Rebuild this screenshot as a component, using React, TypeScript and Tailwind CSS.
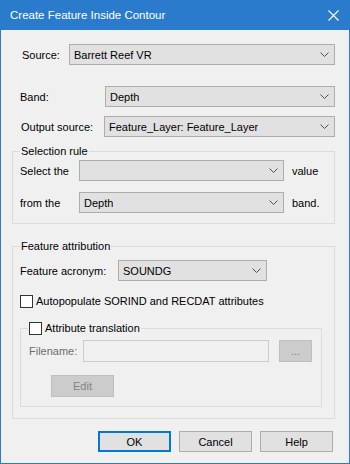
import React from "react";

const FONT = "font-['Liberation_Sans',Arial,sans-serif] text-[11px] leading-4 text-black";

function Chevron() {
  return (
    <svg width="9" height="5" viewBox="0 0 9 5" className="shrink-0">
      <path d="M0.5 0.5 L4.5 4.5 L8.5 0.5" fill="none" stroke="#505050" strokeWidth="1" />
    </svg>
  );
}

function Combo({ value, className }: { value?: string; className: string }) {
  return (
    <div
      className={`h-[21px] shrink-0 flex items-center justify-between pl-[4px] pr-[5px] bg-[#e1e1e1] border border-[#adadad] ${className}`}
    >
      <span className="truncate">{value}</span>
      <Chevron />
    </div>
  );
}

function Label({ text, className }: { text: string; className: string }) {
  return <span className={`shrink-0 whitespace-nowrap ${className}`}>{text}</span>;
}

function CheckBox() {
  return <div className="w-[13px] h-[13px] shrink-0 bg-white border border-[#333333]" />;
}

function Button({ label, primary }: { label: string; primary?: boolean }) {
  return (
    <button
      className={`w-[73px] h-[21px] shrink-0 flex items-center justify-center bg-[#e1e1e1] ${
        primary ? "border-2 border-[#0078d7]" : "border border-[#adadad]"
      }`}
    >
      {label}
    </button>
  );
}

export default function App() {
  return (
    <div className={`w-[350px] h-[464px] flex flex-col bg-[#f0f0f0] border-x border-b border-[#2b7bcc] ${FONT}`}>
      {/* Title bar */}
      <div className="h-[30px] shrink-0 -mx-px flex items-center justify-between bg-[#2b7bcc] pl-[10px] pr-[11px] text-white text-[11.5px]">
        <span>Create Feature Inside Contour</span>
        <svg width="11" height="11" viewBox="0 0 11 11">
          <path d="M0.5 0.5 L10.5 10.5 M10.5 0.5 L0.5 10.5" stroke="white" strokeWidth="1.1" />
        </svg>
      </div>

      {/* Source */}
      <div className="mt-[14px] flex items-center pl-[21px]">
        <Label text="Source:" className="w-[47px]" />
        <Combo value="Barrett Reef VR" className="w-[266px]" />
      </div>

      {/* Band */}
      <div className="mt-[21px] flex items-center pl-[19px]">
        <Label text="Band:" className="w-[85px]" />
        <Combo value="Depth" className="w-[230px]" />
      </div>

      {/* Output source */}
      <div className="mt-[9px] flex items-center pl-[20px]">
        <Label text="Output source:" className="w-[83px]" />
        <Combo value="Feature_Layer: Feature_Layer" className="w-[231px]" />
      </div>

      {/* Selection rule */}
      <fieldset className="mt-[6px] ml-[11px] w-[323px] shrink-0 border border-[#dcdcdc] pb-[10px]">
        <legend className="ml-[7px] px-[1px]">Selection rule</legend>
        <div className="mt-px flex items-center pl-[7px]">
          <Label text="Select the" className="w-[59px]" />
          <Combo className="w-[205px]" />
          <Label text="value" className="ml-[8px]" />
        </div>
        <div className="mt-[11px] flex items-center pl-[7px]">
          <Label text="from the" className="w-[59px]" />
          <Combo value="Depth" className="w-[205px]" />
          <Label text="band." className="ml-[8px]" />
        </div>
      </fieldset>

      {/* Feature attribution */}
      <fieldset className="mt-[14px] ml-[11px] w-[323px] shrink-0 border border-[#dcdcdc] pb-[11px]">
        <legend className="ml-[7px] px-[1px]">Feature attribution</legend>
        <div className="mt-[6px] flex items-center pl-[7px]">
          <Label text="Feature acronym:" className="w-[98px]" />
          <Combo value="SOUNDG" className="w-[149px]" />
        </div>
        <div className="mt-[12px] flex items-center gap-[3px] pl-[7px]">
          <CheckBox />
          <Label text="Autopopulate SORIND and RECDAT attributes" className="" />
        </div>

        {/* Attribute translation */}
        <fieldset className="mt-[11px] ml-[7px] w-[302px] border border-[#dcdcdc] pb-[9px]">
          <legend className="ml-[7px] px-[1px]">
            <div className="flex items-center gap-[3px]">
              <CheckBox />
              <Label text="Attribute translation" className="" />
            </div>
          </legend>
          <div className="mt-[4px] flex items-center pl-[8px] text-[#6d6d6d]">
            <Label text="Filename:" className="w-[54px]" />
            <div className="w-[186px] h-[22px] shrink-0 bg-[#f0f0f0] border border-[#cccccc]" />
            <div className="ml-[10px] w-[33px] h-[22px] shrink-0 flex items-center justify-center bg-[#cccccc] border border-[#bfbfbf] text-[#838383]">
              ...
            </div>
          </div>
          <div className="mt-[13px] ml-[30px] w-[63px] h-[22px] flex items-center justify-center bg-[#cccccc] border border-[#bfbfbf] text-[#838383]">
            Edit
          </div>
        </fieldset>
      </fieldset>

      {/* Buttons */}
      <div className="mt-[12px] flex gap-[8px] pl-[97px]">
        <Button label="OK" primary />
        <Button label="Cancel" />
        <Button label="Help" />
      </div>
    </div>
  );
}
